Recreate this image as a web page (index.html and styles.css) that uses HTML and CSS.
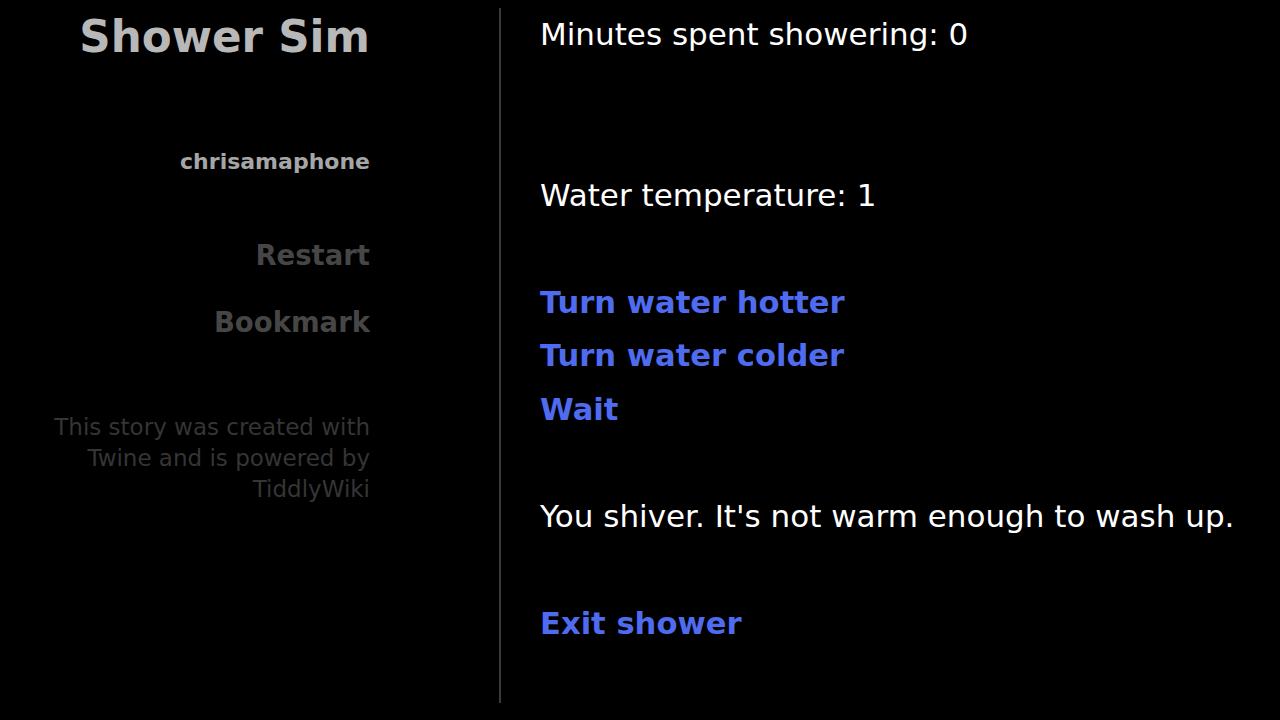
FILE: index.html
```html
<!DOCTYPE html>
<html>
<head>
<meta charset="utf-8">
<link rel="stylesheet" href="styles.css">
</head>
<body>
<div class="page">
  <aside class="sidebar">
    <h1 class="title">Shower Sim</h1>
    <div class="author">chrisamaphone</div>
    <nav class="menu">
      <a class="menu-item">Restart</a>
      <a class="menu-item">Bookmark</a>
    </nav>
    <p class="credits">This story was created with<br>Twine and is powered by<br>TiddlyWiki</p>
  </aside>
  <main class="passage">
    <div class="line">Minutes spent showering: 0</div>
    <div class="line"></div>
    <div class="line"></div>
    <div class="line">Water temperature: 1</div>
    <div class="line"></div>
    <div class="line"><a class="link">Turn water hotter</a></div>
    <div class="line"><a class="link">Turn water colder</a></div>
    <div class="line"><a class="link">Wait</a></div>
    <div class="line"></div>
    <div class="line">You shiver. It's not warm enough to wash up.</div>
    <div class="line"></div>
    <div class="line"><a class="link">Exit shower</a></div>
  </main>
</div>
</body>
</html>
```

FILE: styles.css
```css
html, body {
  margin: 0;
  padding: 0;
  background: #000;
}
body {
  font-family: "DejaVu Sans", Verdana, sans-serif;
  width: 1280px;
  height: 720px;
  overflow: hidden;
}
.page {
  display: flex;
  padding: 8px 0 0 8px;
  height: 712px;
  box-sizing: border-box;
}
.sidebar {
  width: 362px;
  flex: none;
  text-align: right;
  margin-right: 129px;
}
.title {
  margin: 0;
  font-size: 43.6px;
  line-height: 58px;
  font-weight: bold;
  color: #b8b8b8;
}
.author {
  margin-top: 81px;
  font-size: 22px;
  line-height: 30px;
  font-weight: bold;
  color: #a6a6a6;
}
.menu {
  margin-top: 58px;
  display: flex;
  flex-direction: column;
  align-items: flex-end;
  gap: 27px;
}
.menu-item {
  font-size: 27.5px;
  line-height: 40px;
  font-weight: bold;
  color: #464646;
}
.credits {
  margin: 70px 0 0 0;
  font-size: 23px;
  line-height: 31px;
  color: #353535;
}
.passage {
  border-left: 2px solid #3a3a3a;
  padding-left: 39px;
  height: 695px;
  box-sizing: border-box;
  color: #fff;
  font-size: 31px;
}
.line {
  height: 53.5px;
  line-height: 53.5px;
  white-space: nowrap;
}
.link {
  color: #4f6cf0;
  font-weight: bold;
  font-size: 30.6px;
}
```
